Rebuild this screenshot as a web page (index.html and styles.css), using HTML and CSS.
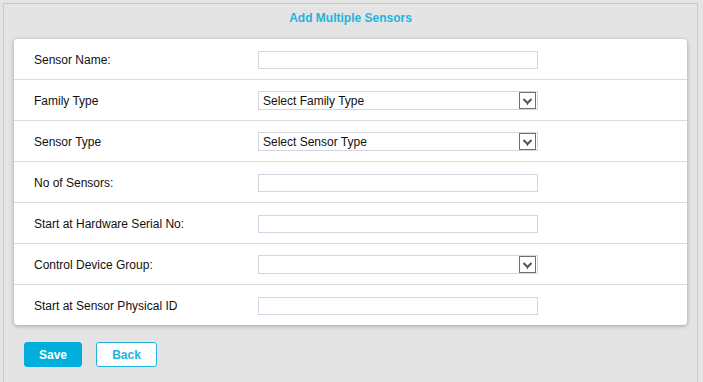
FILE: index.html
```html
<!DOCTYPE html>
<html>
<head>
    <title>Add Multiple Sensors</title>
    <link rel="stylesheet" href="styles.css">
</head>
<body>
    <div class="panel">
        <h1 class="panel-title">Add Multiple Sensors</h1>

        <div class="form-card">
            <div class="form-row">
                <label class="form-label">Sensor Name:</label>
                <input class="form-input" type="text">
            </div>
            <div class="form-row">
                <label class="form-label">Family Type</label>
                <div class="form-select">
                    <span>Select Family Type</span>
                    <span class="select-arrow"><svg width="9" height="7" viewBox="0 0 9 7"><path d="M0.5 1 L4.5 5 L8.5 1" fill="none" stroke="#555" stroke-width="2"/><rect x="4" y="5" width="1" height="2" fill="#555"/></svg></span>
                </div>
            </div>
            <div class="form-row">
                <label class="form-label">Sensor Type</label>
                <div class="form-select">
                    <span>Select Sensor Type</span>
                    <span class="select-arrow"><svg width="9" height="7" viewBox="0 0 9 7"><path d="M0.5 1 L4.5 5 L8.5 1" fill="none" stroke="#555" stroke-width="2"/><rect x="4" y="5" width="1" height="2" fill="#555"/></svg></span>
                </div>
            </div>
            <div class="form-row">
                <label class="form-label">No of Sensors:</label>
                <input class="form-input" type="text">
            </div>
            <div class="form-row">
                <label class="form-label">Start at Hardware Serial No:</label>
                <input class="form-input" type="text">
            </div>
            <div class="form-row">
                <label class="form-label">Control Device Group:</label>
                <div class="form-select">
                    <span></span>
                    <span class="select-arrow"><svg width="9" height="7" viewBox="0 0 9 7"><path d="M0.5 1 L4.5 5 L8.5 1" fill="none" stroke="#555" stroke-width="2"/><rect x="4" y="5" width="1" height="2" fill="#555"/></svg></span>
                </div>
            </div>
            <div class="form-row">
                <label class="form-label">Start at Sensor Physical ID</label>
                <input class="form-input" type="text">
            </div>
        </div>

        <div class="form-actions">
            <button class="btn btn-save">Save</button>
            <button class="btn btn-back">Back</button>
        </div>
    </div>
</body>
</html>
```

FILE: styles.css
```css
body {
    margin: 0;
    background-color: #e4e4e4;
    font-family: "Liberation Sans", Arial, sans-serif;
    font-size: 12px;
    color: #111;
    height: 382px;
    overflow: hidden;
}
.panel {
    box-sizing: border-box;
    height: 379px;
    margin: 3px 5px 0 3px;
    border: 1px solid #c9c9c9;
    border-bottom: none;
    padding: 0 10px;
}
.panel-title {
    margin: 0 0 13px;
    padding-top: 6px;
    font-size: 12px;
    line-height: 16px;
    font-weight: bold;
    text-align: center;
    color: #1fb3e0;
}
.form-card {
    background-color: #fff;
    border-radius: 4px;
    box-shadow: 0 1px 4px rgba(0,0,0,0.3);
}
.form-row {
    display: grid;
    grid-template-columns: 244px 280px;
    align-items: center;
    height: 40px;
    border-bottom: 1px solid #dcdcdc;
}
.form-row:last-child {
    border-bottom: none;
}
.form-label {
    padding-left: 20px;
    padding-top: 1px;
}
.form-input {
    box-sizing: border-box;
    width: 280px;
    height: 18px;
    margin: 1px 0 0;
    padding: 0;
    border: 1px solid #d3d6e2;
    background: #fff;
}
.form-select {
    box-sizing: border-box;
    display: flex;
    align-items: center;
    justify-content: space-between;
    width: 280px;
    height: 19px;
    margin-top: 1px;
    padding: 0 1px 0 4px;
    border: 1px solid #d3d6e2;
    color: #111;
}
.select-arrow {
    box-sizing: border-box;
    display: flex;
    align-items: center;
    justify-content: center;
    width: 17px;
    height: 17px;
    border: 1px solid #707070;
    padding-top: 2px;
}
.form-actions {
    display: flex;
    gap: 14px;
    margin-top: 17px;
    padding-left: 10px;
}
.btn {
    box-sizing: border-box;
    height: 25px;
    border-radius: 3px;
    font-family: "Liberation Sans", Arial, sans-serif;
    font-size: 12px;
    font-weight: bold;
    cursor: pointer;
}
.btn-save {
    width: 58px;
    background-color: #00afdb;
    border: 1px solid #00afdb;
    color: #fff;
}
.btn-back {
    width: 61px;
    background-color: #fff;
    border: 1px solid #1fb0dd;
    color: #1fb3e0;
}
```
